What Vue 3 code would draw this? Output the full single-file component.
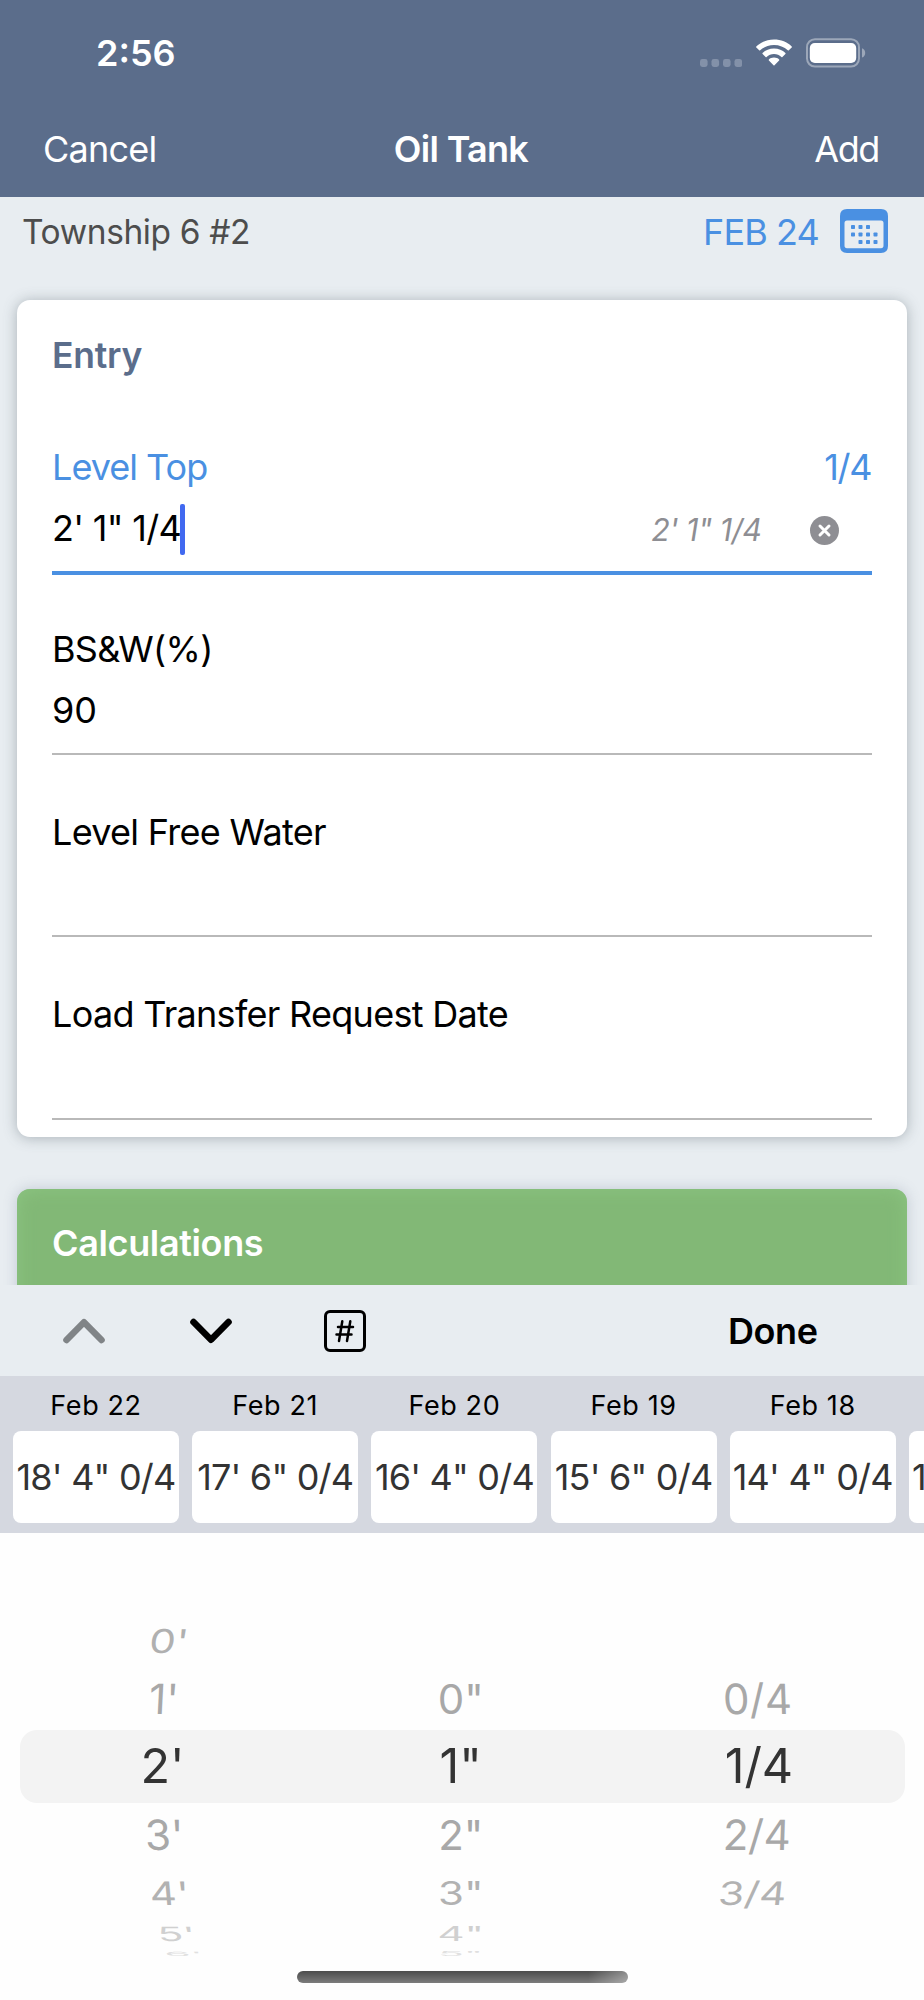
<template>
  <div class="screen">
    <header class="header">
      <div class="status-bar">
        <span class="time">2:56</span>
        <div class="status-icons">
          <svg class="signal" width="42" height="8" viewBox="0 0 42 8">
            <rect v-for="n in 4" :key="n" :x="(n - 1) * 11.5" y="0" width="7.6" height="8" rx="2.4" />
          </svg>
          <svg class="wifi" width="36" height="28" viewBox="0 0 36 28">
            <path d="M18 0.5C25 0.5 31.2 3.1 35.7 7.4Q36.2 7.9 35.7 8.4L32.8 11.3Q32.3 11.8 31.8 11.3C28.2 7.9 23.3 5.9 18 5.9S7.8 7.9 4.2 11.3Q3.7 11.8 3.2 11.3L.3 8.4Q-.2 7.9 .3 7.4C4.8 3.1 11 .5 18 .5Z" />
            <path d="M18 9.6C22.5 9.6 26.5 11.3 29.4 14Q29.9 14.5 29.4 15L26.4 17.9Q25.9 18.4 25.4 17.9C23.5 16.1 20.9 15 18 15S12.5 16.1 10.6 17.9Q10.1 18.4 9.6 17.9L6.6 15Q6.1 14.5 6.6 14C9.5 11.3 13.5 9.6 18 9.6Z" />
            <path d="M18 18.6C20.2 18.6 21.9 19.3 23.1 20.4Q23.6 20.9 23.1 21.4L18.5 26.2Q18 26.7 17.5 26.2L12.9 21.4Q12.4 20.9 12.9 20.4C14.1 19.3 15.8 18.6 18 18.6Z" />
          </svg>
          <svg class="battery" width="60" height="30" viewBox="0 0 60 30">
            <rect class="battery-case" x="1" y="1.2" width="52" height="27.4" rx="8" />
            <rect x="3.8" y="5" width="46.4" height="20" rx="5" />
            <path class="battery-cap" d="M56 10.2Q59.2 11.6 59.2 14.9T56 19.6Z" />
          </svg>
        </div>
      </div>
      <nav class="nav-bar">
        <a class="nav-link">Cancel</a>
        <h1>Oil Tank</h1>
        <a class="nav-link add">Add</a>
      </nav>
    </header>

    <main class="content">
      <div class="sub-header">
        <span class="location">Township 6 #2</span>
        <div class="date">
          <span>FEB 24</span>
          <svg width="48" height="44" viewBox="0 0 48 44">
            <path fill-rule="evenodd" d="M7 0H41Q48 0 48 7V37Q48 44 41 44H7Q0 44 0 37V7Q0 0 7 0ZM7 11.5Q4.500 11.5 4.5 14V36.5Q4.5 39.3 7 39.3H41Q43.5 39.3 43.5 36.5V14Q43.5 11.5 41 11.5Z" />
            <rect v-for="(d, i) in calendarDots" :key="i" :x="d[0]" :y="d[1]" width="4" height="4" rx="0.8" />
          </svg>
        </div>
      </div>

      <section class="card">
        <h2>Entry</h2>
        <div v-for="f in fields" :key="f.label" class="field" :class="{ active: f.active }">
          <div class="field-label">
            <span>{{ f.label }}</span>
            <span v-if="f.unit" class="unit">{{ f.unit }}</span>
          </div>
          <div class="field-value">
            <span>{{ f.value }}</span>
            <template v-if="f.active">
              <i class="cursor"></i>
              <em class="hint">{{ f.value }}</em>
              <svg class="clear" width="29" height="29" viewBox="0 0 29 29">
                <circle cx="14.5" cy="14.5" r="14.5" />
                <path d="M10 10L19 19M19 10L10 19" />
              </svg>
            </template>
          </div>
          <div class="field-line"></div>
        </div>
      </section>

      <section class="calculations">
        <h2>Calculations</h2>
      </section>
    </main>

    <div class="toolbar">
      <svg class="arrow up" width="42" height="26" viewBox="0 0 42 26">
        <path d="M3.5 22L21 4.3L38.5 22" />
      </svg>
      <svg class="arrow down" width="42" height="26" viewBox="0 0 42 26">
        <path d="M3.5 4L21 21.7L38.5 4" />
      </svg>
      <svg class="number" width="42" height="42" viewBox="0 0 42 42">
        <rect x="1.5" y="1.5" width="39" height="39" rx="4.5" />
        <path d="M18.3 11.3L15 31M26.3 11.3L23 31M14 17H29M12.5 24.6H27.5" />
      </svg>
      <span class="done">Done</span>
    </div>

    <div class="history">
      <div v-for="h in history" :key="h.level" class="history-item">
        <span class="day">{{ h.day }}</span>
        <div class="level">{{ h.level }}</div>
      </div>
    </div>

    <div class="picker">
      <div class="selection"></div>
      <div v-for="(col, c) in columns" :key="c" class="wheel">
        <div v-for="(item, i) in col" :key="i" class="wheel-item" :class="'row-' + i">
          <span :style="{ transform: `translateX(${item[1]}px) skewX(${item[2]}deg) scaleY(${squash[i]})` }">{{ item[0] }}</span>
        </div>
      </div>
      <div class="home-indicator"></div>
    </div>
  </div>
</template>

<script setup>
import { ref } from 'vue';

const fields = ref([
  { label: 'Level Top', value: `2' 1" 1/4`, unit: '1/4', active: true },
  { label: 'BS&W(%)', value: '90' },
  { label: 'Level Free Water', value: '' },
  { label: 'Load Transfer Request Date', value: '' },
]);

const history = [
  { day: 'Feb 22', level: `18' 4" 0/4` },
  { day: 'Feb 21', level: `17' 6" 0/4` },
  { day: 'Feb 20', level: `16' 4" 0/4` },
  { day: 'Feb 19', level: `15' 6" 0/4` },
  { day: 'Feb 18', level: `14' 4" 0/4` },
  { day: '', level: '1' },
];

const calendarDots = [
  [11, 16], [18.5, 16], [26, 16],
  [11, 23.5], [18.5, 23.5], [26, 23.5], [33.5, 23.5],
  [18.5, 31], [26, 31], [33.5, 31],
];

// vertical squash of each wheel row
const squash = [0.78, 0.99, 1, 0.99, 0.77, 0.47, 0.14];

// [text, shift, skew]
const columns = [
  [["0'", 6.5, -7], ["1'", 1, -3], ["2'", 0, 0], ["3'", 2, 2], ["4'", 6.5, 5], ["5'", 13.5, 10], ["6'", 21.5, 20]],
  [['', 0, 0], ['0"', 0, 0], ['1"', 0, 0], ['2"', 0, 0], ['3"', 0, 0], ['4"', 0, 0], ['5"', 0, 0]],
  [['', 0, 0], ['0/4', -2, 2], ['1/4', 0, 0], ['2/4', -2, -2], ['3/4', -6.5, -6], ['', 0, 0], ['', 0, 0]],
];
</script>

<style>
body {
  margin: 0;
}
</style>

<style scoped>
.screen {
  width: 924px;
  height: 2000px;
  overflow: hidden;
  display: flex;
  flex-direction: column;
  background: #e8edf1;
  font-family: Inter, 'Liberation Sans', sans-serif;
  font-size: 36px;
  color: #000;
}

.header {
  flex: none;
  height: 197px;
  background: #5b6d8b;
  color: #fff;
}

.status-bar {
  display: flex;
  align-items: center;
  justify-content: space-between;
  height: 106px;
  padding: 0 58px 0 96px;
}

.time {
  font-weight: 600;
}

.status-icons {
  display: flex;
  align-items: center;
  fill: #fff;
}

.signal {
  fill: #8391a9;
  margin: 19px 14px 0 0;
}

.wifi {
  margin-right: 14px;
}

.battery-case {
  fill: none;
  stroke: #9ca7b9;
  stroke-width: 2;
}

.battery-cap {
  fill: #9ca7b9;
}

.nav-bar {
  display: grid;
  grid-template-columns: 1fr auto 1fr;
  align-items: center;
  height: 86px;
  padding: 0 45px 0 43px;
}

.nav-link {
  letter-spacing: -0.75px;
}

.add {
  text-align: right;
  letter-spacing: -1.4px;
}

h1 {
  margin: 0;
  font-size: 36px;
  font-weight: 600;
  letter-spacing: -0.7px;
}

.content {
  flex: none;
  height: 1088px;
  overflow: hidden;
}

.sub-header {
  display: flex;
  align-items: center;
  justify-content: space-between;
  height: 69px;
  padding: 0 36px 0 22px;
}

.location {
  font-size: 33.5px;
  letter-spacing: -0.39px;
  color: #4d4d4d;
}

.date {
  display: flex;
  align-items: center;
  gap: 21px;
  color: #4a90e2;
  fill: #4a90e2;
  letter-spacing: -0.89px;
}

.date svg {
  margin-top: -1px;
}

.card {
  box-sizing: border-box;
  height: 837px;
  margin: 34px 17px 0;
  padding: 36px 35px 0;
  background: #fff;
  border-radius: 13px;
  box-shadow: 0 1px 14px rgba(80, 95, 105, 0.42);
}

h2 {
  margin: 0;
  height: 40px;
  line-height: 40px;
  font-size: 35.5px;
  font-weight: 600;
  letter-spacing: -0.25px;
  color: #5b6d8b;
}

.card h2 {
  margin-bottom: 15.3px;
}

.field {
  box-sizing: border-box;
  height: 182.2px;
  padding-top: 51px;
}

.field-label {
  display: flex;
  align-items: center;
  justify-content: space-between;
  height: 50px;
  letter-spacing: -0.7px;
}

.active .field-label {
  color: #4a90e2;
  letter-spacing: -0.98px;
}

.active .unit {
  margin-right: 1px;
  letter-spacing: -1.4px;
}

.field-value {
  display: flex;
  align-items: center;
  height: 72px;
}

.active .field-value {
  letter-spacing: -0.69px;
}

.cursor {
  width: 4.5px;
  height: 51px;
  margin: 3px 0 0 -1px;
  border-radius: 2px;
  background: #4169f0;
}

.hint {
  margin-left: auto;
  padding-top: 3px;
  font-size: 30.5px;
  letter-spacing: -0.49px;
  color: #8e8e93;
}

.clear {
  margin: 4px 33.5px 0 48px;
}

.clear circle {
  fill: #8e8e93;
}

.clear path {
  fill: none;
  stroke: #fff;
  stroke-width: 3;
  stroke-linecap: round;
}

.field-line {
  height: 2px;
  margin-top: 6.8px;
  background: #b9b9b9;
}

.active .field-line {
  height: 4px;
  background: #4a90e2;
}

.calculations {
  height: 300px;
  margin: 51.5px 17px 0;
  padding: 34px 35px 0;
  background: #82b876;
  border-radius: 13px;
  box-shadow: 0 0 14px rgba(80, 95, 125, 0.25), inset 0 0 18px #8cc582;
}

.calculations h2 {
  font-size: 36px;
  letter-spacing: -0.36px;
  color: #fff;
}

.toolbar {
  flex: none;
  display: flex;
  align-items: center;
  height: 91px;
  padding-left: 63px;
}

.arrow {
  fill: none;
  stroke: #000;
  stroke-width: 6.6;
  stroke-linecap: round;
  stroke-linejoin: round;
}

.up {
  stroke: #808487;
}

.down {
  margin-left: 85px;
}

.number {
  margin-left: 92px;
  fill: none;
  stroke: #000;
  stroke-width: 3;
  stroke-linecap: round;
}

.number path {
  stroke-width: 2.5;
}

.done {
  margin-left: 362px;
  font-weight: 600;
  letter-spacing: -0.4px;
}

.history {
  flex: none;
  box-sizing: border-box;
  display: flex;
  gap: 13.2px;
  height: 157px;
  padding: 8px 0 0 13px;
  background: #d5d8e0;
}

.history-item {
  flex: none;
  width: 166px;
  text-align: center;
}

.day {
  display: block;
  height: 43px;
  line-height: 43px;
  font-size: 27px;
  letter-spacing: 0.6px;
}

.level {
  height: 92px;
  margin-top: 4px;
  line-height: 92px;
  white-space: nowrap;
  letter-spacing: -0.8px;
  color: #333;
  background: #fff;
  border-radius: 8px;
}

.history-item:last-child .level {
  padding-left: 3px;
  text-align: left;
}

.picker {
  position: relative;
  flex: 1;
  display: flex;
  padding: 80px 16px 0 13.5px;
  background: #fefefe;
}

.selection {
  position: absolute;
  left: 19.5px;
  right: 19.5px;
  top: 197px;
  height: 73px;
  border-radius: 17px;
  background: #f3f3f3;
}

.wheel {
  position: relative;
  flex: 1;
}

.wheel-item {
  display: flex;
  align-items: center;
  justify-content: center;
  font-size: 42px;
  line-height: 1;
  color: #a8a8a8;
}

.row-0 {
  height: 55px;
  color: #b0b0b0;
}

.row-1 {
  height: 62px;
}

.row-2 {
  height: 73px;
  font-size: 48.5px;
  color: #333;
}

.row-3 {
  height: 63px;
}

.row-4 {
  height: 53px;
  color: #b2b2b2;
}

.row-5 {
  height: 29px;
  color: #d0d0d0;
}

.row-6 {
  height: 12px;
  color: #e0e0e0;
}

.home-indicator {
  position: absolute;
  left: 297px;
  top: 438px;
  width: 331px;
  height: 12px;
  border-radius: 6px;
  background: linear-gradient(to right, transparent 88%, rgba(255, 255, 255, 0.35)), linear-gradient(#4c4c4c, #7c7c7c);
}
</style>
